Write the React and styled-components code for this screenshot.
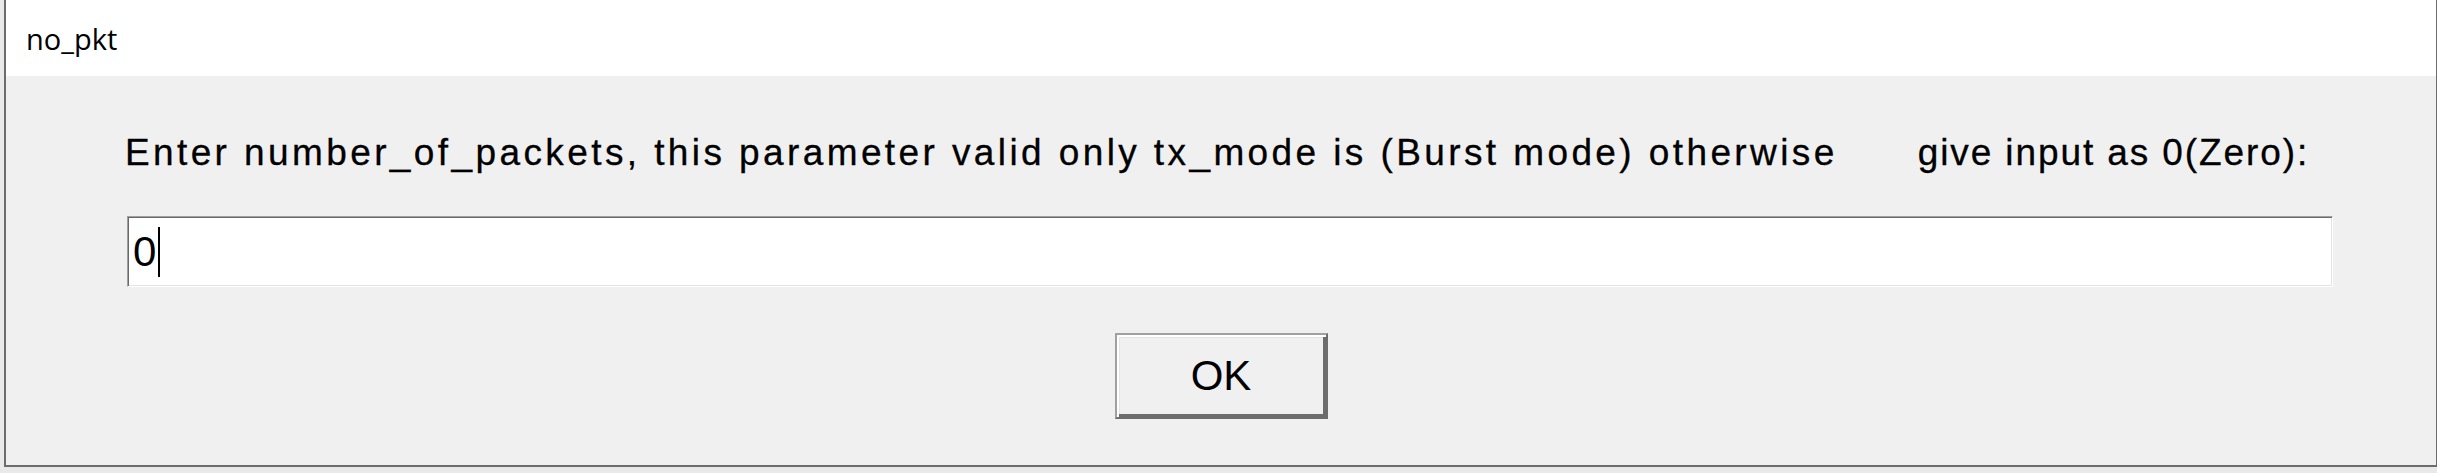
import React from "react";
import styled, { createGlobalStyle } from "styled-components";

const Global = createGlobalStyle`
  html, body { margin: 0; padding: 0; background: #e9e9e9; }
  body { width: 2437px; height: 473px; overflow: hidden; }
  #root { height: 100%; }
`;

const Screen = styled.div`
  height: 473px;
  padding-left: 4px;
  box-sizing: border-box;
  display: flex;
  align-items: flex-start;
`;

const Window = styled.div`
  flex: 1;
  height: 467px;
  box-sizing: border-box;
  border-left: 2px solid #6c6c6c;
  border-right: 1px solid #6c6c6c;
  border-bottom: 2px solid #6c6c6c;
  background: #f0f0f0;
  display: flex;
  flex-direction: column;
`;

const TitleBar = styled.div`
  height: 76px;
  flex: none;
  background: #ffffff;
  display: flex;
  align-items: center;
  padding-left: 20px;
  font-family: "Open Sans", "Noto Sans", sans-serif;
  font-size: 29px;
  color: #000;
`;

const Body = styled.div`
  flex: 1;
  display: flex;
  flex-direction: column;
  align-items: center;
  padding-top: 55px;
`;

const Prompt = styled.div`
  display: flex;
  gap: 80px;
  margin-right: 8px;
  font-family: "Liberation Sans", Arial, sans-serif;
  font-size: 37px;
  line-height: 44px;
  color: #000;
  -webkit-text-stroke: 0.3px #000;
  white-space: nowrap;
`;

const Segment = styled.span`
  letter-spacing: ${(p) => p.$tracking}px;
`;

const Entry = styled.div`
  align-self: stretch;
  margin: 41px 103px 0 121px;
  height: 71px;
  box-sizing: border-box;
  background: #ffffff;
  border: 1px solid;
  border-color: #a0a0a0 #ffffff #ffffff #a0a0a0;
  box-shadow: inset 1px 1px 0 #696969, inset -1px -1px 0 #e3e3e3;
  display: flex;
  align-items: center;
  padding-left: 5px;
  font-family: "Liberation Sans", Arial, sans-serif;
  font-size: 42px;
  color: #000;
`;

const Caret = styled.span`
  display: inline-block;
  width: 2px;
  height: 50px;
  margin-left: 2px;
  background: #000;
`;

const Button = styled.button`
  margin-top: 46px;
  width: 213px;
  height: 86px;
  box-sizing: border-box;
  background: #f0f0f0;
  border: 2px solid;
  border-color: #a0a0a0 #6d6d6d #6d6d6d #a0a0a0;
  box-shadow: inset 2px 2px 0 #ffffff, inset -3px -3px 0 #6d6d6d,
    inset 3px 3px 0 #e3e3e3;
  font-family: "Liberation Sans", Arial, sans-serif;
  font-size: 42px;
  color: #000;
  padding: 0;
  display: flex;
  align-items: center;
  justify-content: center;
  cursor: default;
`;

export default function App() {
  return (
    <>
      <Global />
      <Screen>
        <Window>
          <TitleBar>no_pkt</TitleBar>
          <Body>
            <Prompt>
              <Segment $tracking={3.4}>
                Enter number_of_packets, this parameter valid only tx_mode is
                (Burst mode) otherwise
              </Segment>
              <Segment $tracking={1.9}>give input as 0(Zero):</Segment>
            </Prompt>
            <Entry>
              0<Caret />
            </Entry>
            <Button>OK</Button>
          </Body>
        </Window>
      </Screen>
    </>
  );
}
